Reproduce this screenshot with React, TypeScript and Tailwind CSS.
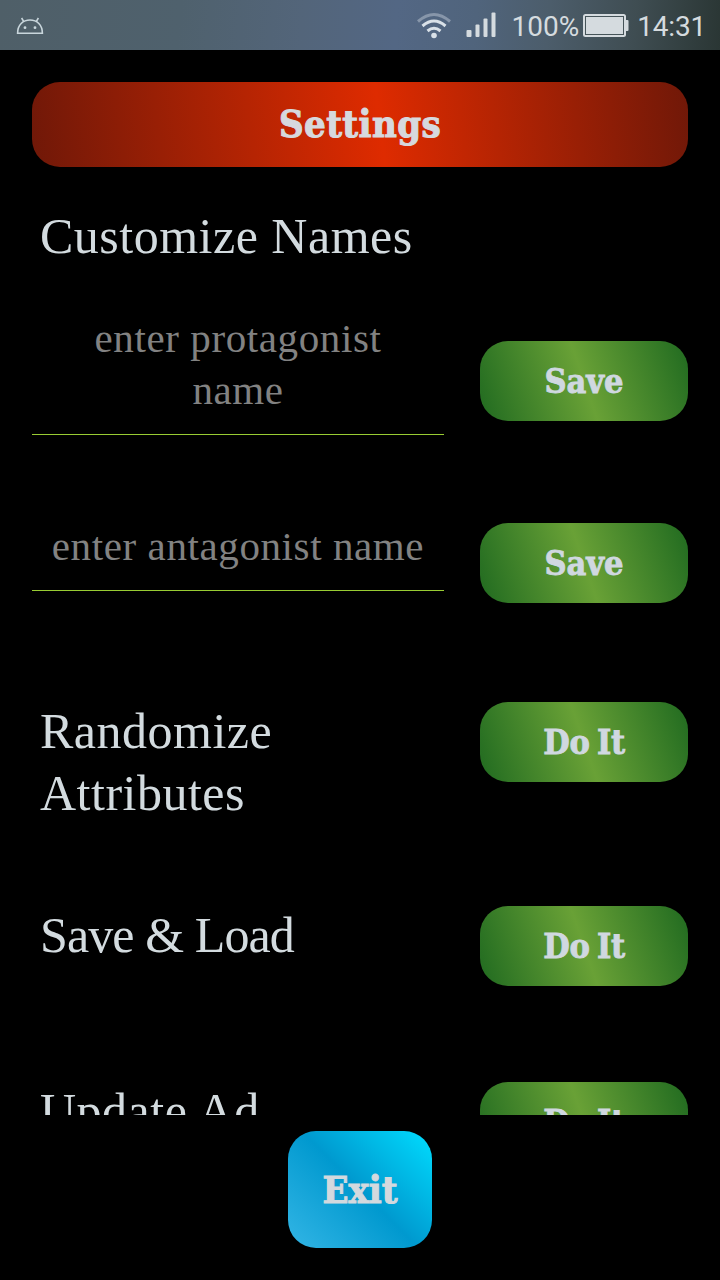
import React, { useState } from 'react';
import clsx from 'clsx';

interface NameFieldProps {
  value: string;
  placeholder: string;
  rows: number;
  onChange: (value: string) => void;
}

function NameField({ value, placeholder, rows, onChange }: NameFieldProps) {
  return (
    <textarea
      rows={rows}
      value={value}
      placeholder={placeholder}
      onChange={(e) => onChange(e.target.value)}
      className="block w-full resize-none overflow-hidden border-b border-[#99cc33] bg-transparent px-4 pb-[18px] pt-px text-center text-[41px] leading-[52px] tracking-[0.6px] text-[#d3dbdf] outline-none placeholder:text-[#828282]"
    />
  );
}

function ActionButton({ label, className }: { label: string; className?: string }) {
  return (
    <button
      className={clsx(
        'flex h-20 w-full items-center justify-center rounded-[28px] bg-[linear-gradient(71deg,#206a20,#69a136_50%,#206a20)] font-["DejaVu_Serif_Condensed","DejaVu_Serif",serif] text-[34px] font-bold text-[#d0d8e0] [-webkit-text-stroke:0.8px_#d0d8e0]',
        label === 'Do It' && '-tracking-[0.3px] [word-spacing:-3px]',
        className,
      )}
    >
      {label}
    </button>
  );
}

function SettingRow({ children, className }: { children: React.ReactNode; className?: string }) {
  return (
    <div className={clsx('grid shrink-0 grid-cols-[412px_208px] items-start gap-x-9', className)}>
      {children}
    </div>
  );
}

function Label({ children, className = 'tracking-[0.5px]' }: { children: React.ReactNode; className?: string }) {
  return <h2 className={clsx('px-2 text-[50px] leading-[62px] text-[#d3dbdf]', className)}>{children}</h2>;
}

function StatusBar() {
  return (
    <header className="flex h-[50px] shrink-0 items-center bg-[linear-gradient(95deg,#4f5f68_0%,#4f616d_25%,#53657a_42%,#536784_55%,#50647c_66%,#4c5d6b_76%,#3f4d52_88%,#2a3634_100%)] pl-4 pr-[14px] font-[Roboto,sans-serif] text-[28px] text-[#d5dbdf]">
      <svg width="28" height="18" viewBox="0 0 28 18" className="mt-px" fill="none" stroke="#c9d6dc" strokeWidth="1.6">
        <path d="M1.6 16.2C1.6 8 7 3 14 3s12.400 5 12.400 13.200ZM7.800 4.600 5.600 1M20.200 4.600 22.400 1" />
        <circle cx="9" cy="10.700" r="1.400" fill="#c9d6dc" stroke="none" />
        <circle cx="19" cy="10.700" r="1.400" fill="#c9d6dc" stroke="none" />
      </svg>
      <div className="ml-auto flex items-center">
        <svg width="36" height="28" viewBox="0 0 36 28" className="mt-px" fill="none" strokeWidth="3">
          <path d="M2 9.500Q18-4.500 34 9.500" stroke="#8796aa" />
          <path d="M6.500 14Q18 4 29.500 14" stroke="#d9e1e8" />
          <path d="M11.500 19Q18 13.500 24.500 19" stroke="#d9e1e8" />
          <circle cx="18" cy="23.500" r="2.800" fill="#d9e1e8" />
        </svg>
        <svg width="31" height="26" viewBox="0 0 31 26" className="ml-3.5" fill="#d5dbdf">
          <rect x="0.500" y="18" width="5" height="7" rx="1" />
          <rect x="9.500" y="12.500" width="4" height="12.500" rx="1" />
          <rect x="17.500" y="6.500" width="4" height="18.500" rx="1" />
          <rect x="25.500" y="0.500" width="4" height="24.500" rx="1" />
        </svg>
        <span className="ml-[15px] mt-[3px] leading-none">100%</span>
        <svg width="46" height="23" viewBox="0 0 46 23" className="ml-1" fill="#d5dbdf">
          <rect x="0" y="0" width="43" height="23" rx="2.500" />
          <rect x="42" y="6" width="3.500" height="11" rx="1" />
          <rect x="2.500" y="2.500" width="38" height="18" fill="none" stroke="#465459" />
        </svg>
        <span className="ml-2 mt-[3px] leading-none -tracking-[0.2px]">14:31</span>
      </div>
    </header>
  );
}

export default function App() {
  const [protagonist, setProtagonist] = useState('');
  const [antagonist, setAntagonist] = useState('');

  return (
    <div className='flex h-[1280px] w-[720px] flex-col overflow-hidden bg-black font-["Liberation_Serif",serif]'>
      <StatusBar />

      <h1 className='mx-8 mt-8 flex h-[85px] shrink-0 items-center justify-center rounded-[28px] bg-[linear-gradient(83deg,#701808,#de2b00_53%,#701808)] pb-0.5 font-["DejaVu_Serif_Condensed","DejaVu_Serif",serif] text-[38px] font-bold tracking-[0.4px] text-[#d6d9de] [-webkit-text-stroke:1px_#d6d9de]'>
        Settings
      </h1>

      <main className="flex h-[948px] shrink-0 flex-col overflow-hidden px-8">
        <SettingRow className="mt-[38px]">
          <Label>Customize Names</Label>
        </SettingRow>

        <SettingRow className="mt-[44px] h-[124px]">
          <NameField rows={2} value={protagonist} placeholder="enter protagonist name" onChange={setProtagonist} />
          <ActionButton label="Save" className="mt-[30px]" />
        </SettingRow>

        <SettingRow className="mt-[84px]">
          <NameField rows={1} value={antagonist} placeholder="enter antagonist name" onChange={setAntagonist} />
          <ActionButton label="Save" className="mt-1" />
        </SettingRow>

        <SettingRow className="mt-[97px]">
          <Label>Randomize Attributes</Label>
          <ActionButton label="Do It" className="mt-0.5" />
        </SettingRow>

        <SettingRow className="mt-20">
          <Label className="-tracking-[0.9px]">Save &amp; Load</Label>
          <ActionButton label="Do It" className="mt-0.5" />
        </SettingRow>

        <SettingRow className="mt-[94px]">
          <Label>Update Ad</Label>
          <ActionButton label="Do It" className="mt-0.5" />
        </SettingRow>
      </main>

      <footer className="flex justify-center pt-4">
        <button className='flex h-[117px] w-36 items-center justify-center rounded-[28px] bg-[linear-gradient(45deg,#33b5e5,#0099cf_50%,#00ddff)] font-["DejaVu_Serif_Condensed","DejaVu_Serif",serif] text-[38px] font-bold text-[#d3d9de] [-webkit-text-stroke:1px_#d3d9de]'>
          Exit
        </button>
      </footer>
    </div>
  );
}
